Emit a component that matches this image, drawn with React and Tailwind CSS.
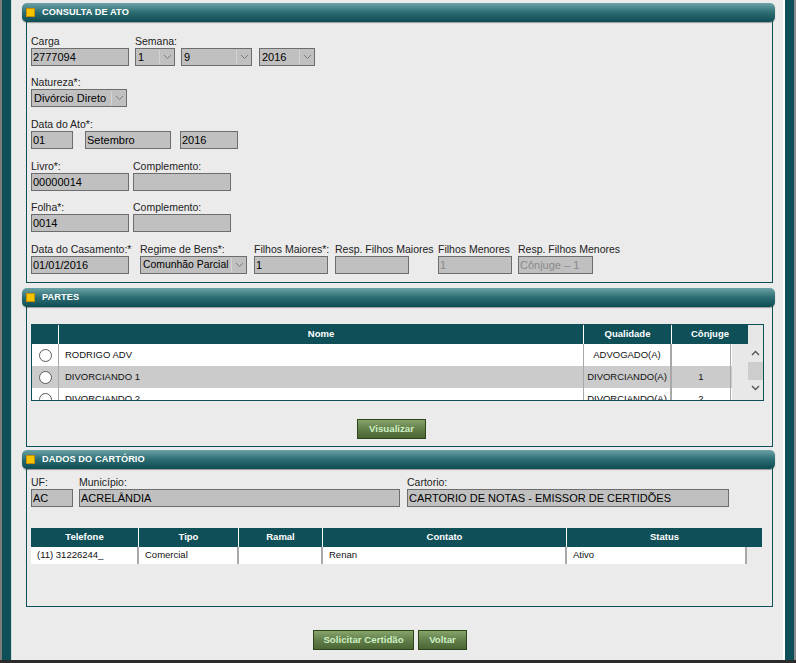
import React from 'react';

const font = { fontFamily: '"Liberation Sans", Arial, sans-serif' };

const Chevron = () => (
  <svg width="9" height="6" viewBox="0 0 9 6" fill="none">
    <path d="M1 1L4.5 4.5L8 1" stroke="#7a7a7a" strokeWidth="1" />
  </svg>
);

const Panel = ({ title, bodyH, children }) => (
  <div className="ml-[10px]">
    <div className="relative z-10 flex h-[19px] w-[753px] items-center rounded-[5px] bg-gradient-to-b from-[#6aa3a7] via-[#2b6d72] to-[#0e4c53] shadow-[0_1px_1px_rgba(0,0,0,0.35)]">
      <div className="ml-[4px] h-[9px] w-[9px] border border-[#c48e00] bg-[#f5c400]" />
      <span className="ml-[7px] text-[9.2px] font-bold tracking-[0.1px] text-white">{title}</span>
    </div>
    <div className={`ml-[4px] -mt-[1px] w-[747px] border border-t-0 border-[#0f5058] bg-[#ebebeb] pl-[4px] ${bodyH}`}>
      {children}
    </div>
  </div>
);

const Label = ({ children }) => (
  <div className="h-[13px] whitespace-nowrap text-[10.5px] leading-[13px] text-[#222]">{children}</div>
);

const Input = ({ w, value, muted }) => (
  <div
    className={`flex h-[18px] items-center border border-[#6d6d6d] bg-[#c0c0c0] pl-[1px] text-[11px] ${w} ${muted ? 'text-[#8a8a8a]' : 'text-black'}`}
  >
    {value}
  </div>
);

const Select = ({ w, value, small }) => (
  <div className={`flex h-[18px] items-center border border-[#6d6d6d] bg-[#c0c0c0] text-black ${small ? 'text-[10.4px]' : 'text-[11px]'} ${w}`}>
    <span className="flex-1 overflow-hidden whitespace-nowrap pl-[2px]">{value}</span>
    <span className="flex h-[14px] w-[15px] shrink-0 items-center justify-center border-l border-[#d4d4d4]">
      <Chevron />
    </span>
  </div>
);

const Field = ({ w, label, children }) => (
  <div className={w}>
    <Label>{label}</Label>
    {children}
  </div>
);

const Radio = () => <div className="h-[13px] w-[13px] rounded-full border border-[#5a5a5a] bg-white" />;

const partes = [
  { nome: 'RODRIGO ADV', q: 'ADVOGADO(A)', c: '', bg: 'bg-white' },
  { nome: 'DIVORCIANDO 1', q: 'DIVORCIANDO(A)', c: '1', bg: 'bg-[#cbcbcb]' },
  { nome: 'DIVORCIANDO 2', q: 'DIVORCIANDO(A)', c: '2', bg: 'bg-white' },
];

const Button = ({ w, children }) => (
  <div
    className={`flex h-[20px] items-center justify-center border border-[#2c4418] bg-gradient-to-b from-[#86a46c] via-[#637f4a] to-[#4b6634] text-[9.7px] font-bold text-[#cdf0c4] ${w}`}
  >
    {children}
  </div>
);

export default function App() {
  return (
    <div className="flex h-[663px] w-[796px] flex-col bg-[#ebebeb]" style={font}>
      <div className="flex h-[660px]">
        <div className="w-[2px] bg-[#7c7c7c]" />
        <div className="w-[9px] bg-[#0f5058]" />
        <div className="w-[1px] bg-[#cfdcdc]" />

        <div className="w-[771px] pt-[3px]">
          {/* CONSULTA DE ATO */}
          <Panel title="CONSULTA DE ATO" bodyH="h-[262px] pt-[14px]">
            <div className="flex">
              <Field w="w-[104px]" label="Carga">
                <Input w="w-[98px]" value="2777094" />
              </Field>
              <div>
                <Label>Semana:</Label>
                <div className="flex">
                  <Select w="w-[40px]" value="1" />
                  <Select w="ml-[6px] w-[71px]" value="9" />
                  <Select w="ml-[7px] w-[56px]" value="2016" />
                </div>
              </div>
            </div>

            <div className="mt-[10px]">
              <Field label="Natureza*:">
                <Select w="w-[96px]" value="Divórcio Direto" />
              </Field>
            </div>

            <div className="mt-[11px]">
              <Label>Data do Ato*:</Label>
              <div className="flex">
                <Input w="w-[42px]" value="01" />
                <Input w="ml-[12px] w-[86px]" value="Setembro" />
                <Input w="ml-[9px] w-[58px]" value="2016" />
              </div>
            </div>

            <div className="mt-[11px] flex">
              <Field w="w-[102px]" label="Livro*:">
                <Input w="w-[98px]" value="00000014" />
              </Field>
              <Field label="Complemento:">
                <Input w="w-[98px]" value="" />
              </Field>
            </div>

            <div className="mt-[10px] flex">
              <Field w="w-[102px]" label="Folha*:">
                <Input w="w-[98px]" value="0014" />
              </Field>
              <Field label="Complemento:">
                <Input w="w-[98px]" value="" />
              </Field>
            </div>

            <div className="mt-[11px] flex">
              <Field w="w-[109px]" label="Data do Casamento:*">
                <Input w="w-[98px]" value="01/01/2016" />
              </Field>
              <Field w="w-[114px]" label="Regime de Bens*:">
                <Select w="w-[107px]" value="Comunhão Parcial" small />
              </Field>
              <Field w="w-[81px]" label="Filhos Maiores*:">
                <Input w="w-[74px]" value="1" />
              </Field>
              <Field w="w-[103px]" label="Resp. Filhos Maiores">
                <Input w="w-[74px]" value="" />
              </Field>
              <Field w="w-[80px]" label="Filhos Menores">
                <Input w="w-[74px]" value="1" muted />
              </Field>
              <Field label="Resp. Filhos Menores">
                <Input w="w-[75px]" value="Cônjuge – 1" muted />
              </Field>
            </div>
          </Panel>

          {/* PARTES */}
          <div className="mt-[5px]">
            <Panel title="PARTES" bodyH="h-[141px] pt-[18px]">
              <div className="h-[77px] w-[733px] overflow-hidden border border-[#0f5058]">
                <div className="flex h-[19px] text-[9.5px] font-bold text-white">
                  <div className="w-[27px] border-r border-white bg-[#0f4f58]" />
                  <div className="flex w-[525px] items-center justify-center border-r border-white bg-[#0f4f58]">Nome</div>
                  <div className="flex w-[88px] items-center justify-center border-r border-white bg-[#0f4f58]">Qualidade</div>
                  <div className="flex w-[76px] items-center justify-center bg-[#0f4f58]">Cônjuge</div>
                  <div className="flex-1 bg-[#e6e6e6]" />
                </div>
                <div className="flex">
                  <div className="w-[700px]">
                    {partes.map((p) => (
                      <div key={p.nome} className={`flex h-[22px] text-[9.5px] text-[#111] ${p.bg}`}>
                        <div className="flex w-[27px] items-center justify-center border-r border-[#a8a8a8]">
                          <Radio />
                        </div>
                        <div className="flex w-[525px] items-center border-r border-[#a8a8a8] pl-[6px]">{p.nome}</div>
                        <div className="flex w-[88px] items-center justify-center border-r-2 border-[#a8a8a8]">{p.q}</div>
                        <div className="flex w-[59px] items-center justify-center border-r border-[#a8a8a8]">{p.c}</div>
                      </div>
                    ))}
                  </div>
                  <div className="flex h-[57px] flex-1 justify-end bg-[#e8e8e8]">
                    <div className="flex w-[16px] flex-col items-center">
                      <svg className="mt-[6px]" width="9" height="6" viewBox="0 0 9 6" fill="none">
                        <path d="M1 5L4.5 1.5L8 5" stroke="#555" strokeWidth="1.4" />
                      </svg>
                      <div className="mt-[6px] h-[18px] w-[15px] bg-[#cdcdcd]" />
                      <svg className="mt-[5px]" width="9" height="6" viewBox="0 0 9 6" fill="none">
                        <path d="M1 1L4.5 4.5L8 1" stroke="#555" strokeWidth="1.4" />
                      </svg>
                    </div>
                  </div>
                </div>
              </div>
              <div className="ml-[326px] mt-[18px]">
                <Button w="w-[69px]">Visualizar</Button>
              </div>
            </Panel>
          </div>

          {/* DADOS DO CARTÓRIO */}
          <div className="mt-[3px]">
            <Panel title="DADOS DO CARTÓRIO" bodyH="h-[139px] pt-[8px]">
              <div className="flex">
                <Field w="w-[48px]" label="UF:">
                  <Input w="w-[42px]" value="AC" />
                </Field>
                <Field w="w-[328px]" label="Município:">
                  <Input w="w-[321px]" value="ACRELÂNDIA" />
                </Field>
                <Field label="Cartorio:">
                  <Input w="w-[322px]" value="CARTORIO DE NOTAS - EMISSOR DE CERTIDÕES" />
                </Field>
              </div>

              <div className="mt-[21px] w-[731px]">
                <div className="flex h-[19px] bg-[#0f4f58] text-[9.5px] font-bold text-white">
                  <div className="flex w-[108px] items-center justify-center border-r border-white">Telefone</div>
                  <div className="flex w-[100px] items-center justify-center border-r border-white">Tipo</div>
                  <div className="flex w-[84px] items-center justify-center border-r border-white">Ramal</div>
                  <div className="flex w-[244px] items-center justify-center border-r border-white">Contato</div>
                  <div className="flex flex-1 items-center justify-center">Status</div>
                </div>
                <div className="flex h-[17px] text-[9.5px] text-[#111]">
                  <div className="flex w-[108px] items-center border-r-2 border-[#a8a8a8] bg-white pl-[6px]">(11) 31226244_</div>
                  <div className="flex w-[100px] items-center border-r-2 border-[#a8a8a8] bg-white pl-[6px]">Comercial</div>
                  <div className="flex w-[84px] items-center border-r-2 border-[#a8a8a8] bg-white" />
                  <div className="flex w-[244px] items-center border-r-2 border-[#a8a8a8] bg-white pl-[6px]">Renan</div>
                  <div className="flex w-[180px] items-center border-r-2 border-[#a8a8a8] bg-white pl-[6px]">Ativo</div>
                </div>
              </div>
            </Panel>
          </div>

          <div className="ml-[301px] mt-[23px] flex gap-[4px]">
            <Button w="w-[101px]">Solicitar Certidão</Button>
            <Button w="w-[49px]">Voltar</Button>
          </div>
        </div>

        <div className="w-[2px] bg-white" />
        <div className="w-[9px] bg-[#0f5058]" />
        <div className="w-[2px] bg-[#8a8a8a]" />
      </div>
      <div className="h-[3px] bg-[#2b2b2b]" />
    </div>
  );
}
